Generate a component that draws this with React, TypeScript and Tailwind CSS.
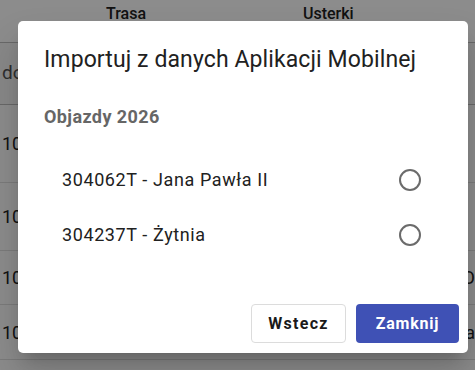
import React from "react";

const rows = [
  { h: "h-[78px]", left: "10", right: "" },
  { h: "h-[68px]", left: "10", right: "" },
  { h: "h-[54px]", left: "10", right: "O" },
  { h: "h-[55px]", left: "10", right: "na" },
  { h: "h-[55px]", left: "", right: "" },
];

function Radio() {
  return <span className="block h-[22px] w-[22px] rounded-full border-2 border-[#6b6b6b]" />;
}

export default function App() {
  return (
    <div className="relative h-[370px] w-[475px] overflow-hidden bg-white font-['Roboto',sans-serif] text-[#212121]">
      {/* table behind the dialog */}
      <div className="flex h-[43px] border-b border-[#bdbdbd] text-[16px] font-medium">
        <div className="w-[106px]" />
        <div className="w-[197px] pt-[2px]">Trasa</div>
        <div className="pt-[2px]">Usterki</div>
      </div>
      <div className="flex h-[62px] items-center border-b border-[#bdbdbd] bg-[#f7f7f7] text-[19px] text-[#555]">
        <span className="pl-[2px]">do</span>
      </div>
      {rows.map((r, i) => (
        <div key={i} className={`flex ${r.h} items-center justify-between border-b border-[#e0e0e0] text-[18px]`}>
          <span className="pl-[2px]">{r.left}</span>
          <span>{r.right}</span>
        </div>
      ))}

      <div className="absolute inset-0 bg-black/45" />

      <div className="absolute left-[18px] top-[21px] flex h-[332px] w-[450px] flex-col rounded-[5px] bg-white shadow-[0_11px_15px_-7px_rgba(0,0,0,0.2),0_24px_38px_3px_rgba(0,0,0,0.14)]">
        <h2 className="px-[26px] pt-[23px] text-[23px] leading-[32px] tracking-[0.1px] text-[#212121]">
          Importuj z danych Aplikacji Mobilnej
        </h2>
        <div className="px-[26px] pt-[29px]">
          <p className="text-[18px] font-bold leading-[24px] tracking-[0.4px] text-[#666]">Objazdy 2026</p>
          <ul className="mt-[23px]">
            <li className="flex h-[55px] items-center justify-between pl-[18px] pr-[21px] text-[18px] tracking-[0.6px]">
              <span>304062T - Jana Pawła II</span>
              <Radio />
            </li>
            <li className="flex h-[55px] items-center justify-between pl-[18px] pr-[21px] text-[18px] tracking-[0.6px]">
              <span>304237T - Żytnia</span>
              <Radio />
            </li>
          </ul>
        </div>
        <div className="mt-auto flex justify-end gap-[10px] pb-[10px] pr-[9px]">
          <button className="h-[39px] w-[95px] rounded-[4px] border border-[#dcdcdc] bg-white text-[16px] font-bold tracking-[0.08em] text-[#1a1a1a]">
            Wstecz
          </button>
          <button className="h-[39px] w-[103px] rounded-[4px] bg-[#3f51b5] text-[16px] font-bold tracking-[0.05em] text-white">
            Zamknij
          </button>
        </div>
      </div>
    </div>
  );
}
